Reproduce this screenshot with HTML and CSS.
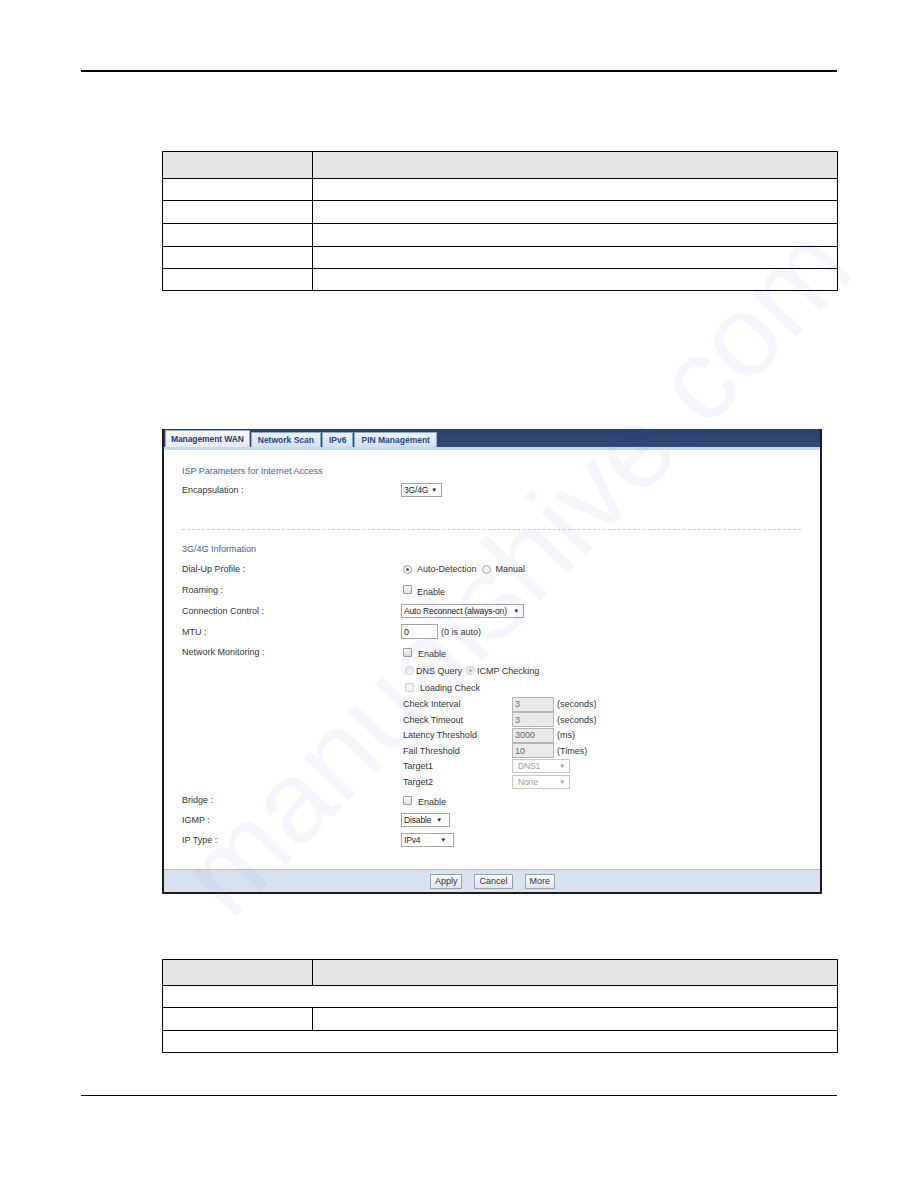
FILE: index.html
```html
<!DOCTYPE html>
<html>
<head>
<meta charset="utf-8">
<title>Management WAN</title>
<link rel="stylesheet" href="styles.css">
</head>
<body>
<div class="page">
  <div class="rule rule-top"></div>

  <table class="doc-table t1">
    <colgroup><col class="c1"><col></colgroup>
    <tr class="hd"><th></th><th></th></tr>
    <tr class="r22"><td></td><td></td></tr>
    <tr class="r23"><td></td><td></td></tr>
    <tr class="r23"><td></td><td></td></tr>
    <tr class="r22"><td></td><td></td></tr>
    <tr class="r22"><td></td><td></td></tr>
  </table>

  <div class="panel">
    <div class="tabbar">
      <div class="tab active">Management WAN</div>
      <div class="tab">Network Scan</div>
      <div class="tab">IPv6</div>
      <div class="tab">PIN Management</div>
    </div>
    <div class="body">
      <div class="row h20"><span class="sec">ISP Parameters for Internet Access</span></div>
      <div class="row h18">
        <span class="lbl">Encapsulation :</span>
        <span class="sel w-encap"><span>3G/4G</span><span class="arr">▼</span></span>
      </div>
      <div class="divider"></div>
      <div class="row h20"><span class="sec">3G/4G Information</span></div>
      <div class="row h20">
        <span class="lbl">Dial-Up Profile :</span>
        <span class="ctl">
          <span class="radio on"></span><span class="opt">Auto-Detection</span>
          <span class="radio"></span><span class="opt">Manual</span>
        </span>
      </div>
      <div class="row h21">
        <span class="lbl">Roaming :</span>
        <span class="ctl"><span class="check"></span><span class="opt low">Enable</span></span>
      </div>
      <div class="row h21">
        <span class="lbl">Connection Control :</span>
        <span class="sel w-conn"><span>Auto Reconnect (always-on)</span><span class="arr">▼</span></span>
      </div>
      <div class="row h21">
        <span class="lbl">MTU :</span>
        <span class="ctl"><span class="inp w-mtu">0</span><span class="unit">(0 is auto)</span></span>
      </div>
      <div class="row h20">
        <span class="lbl">Network Monitoring :</span>
        <span class="ctl"><span class="check"></span><span class="opt low wide">Enable</span></span>
      </div>
      <div class="row h17">
        <span></span>
        <span class="ctl ind">
          <span class="radio dis"></span><span class="opt tight">DNS Query</span>
          <span class="radio dis on"></span><span class="opt tight">ICMP Checking</span>
        </span>
      </div>
      <div class="row h17">
        <span></span>
        <span class="ctl ind"><span class="check dis"></span><span class="opt wide">Loading Check</span></span>
      </div>
      <div class="row h16">
        <span></span>
        <span class="sub"><span class="slbl">Check Interval</span><span class="inp dis w-sub">3</span><span class="unit">(seconds)</span></span>
      </div>
      <div class="row h15">
        <span></span>
        <span class="sub"><span class="slbl">Check Timeout</span><span class="inp dis w-sub">3</span><span class="unit">(seconds)</span></span>
      </div>
      <div class="row h16">
        <span></span>
        <span class="sub"><span class="slbl">Latency Threshold</span><span class="inp dis w-sub">3000</span><span class="unit">(ms)</span></span>
      </div>
      <div class="row h15">
        <span></span>
        <span class="sub"><span class="slbl">Fail Threshold</span><span class="inp dis w-sub">10</span><span class="unit">(Times)</span></span>
      </div>
      <div class="row h16">
        <span></span>
        <span class="sub"><span class="slbl">Target1</span><span class="sel dis w-tgt"><span>DNS1</span><span class="arr">▼</span></span></span>
      </div>
      <div class="row h16">
        <span></span>
        <span class="sub"><span class="slbl">Target2</span><span class="sel dis w-tgt"><span>None</span><span class="arr">▼</span></span></span>
      </div>
      <div class="row h20">
        <span class="lbl">Bridge :</span>
        <span class="ctl"><span class="check"></span><span class="opt low wide">Enable</span></span>
      </div>
      <div class="row h20">
        <span class="lbl">IGMP :</span>
        <span class="sel w-igmp"><span>Disable</span><span class="arr">▼</span></span>
      </div>
      <div class="row h20">
        <span class="lbl">IP Type :</span>
        <span class="sel w-ip"><span>IPv4</span><span class="arr">▼</span></span>
      </div>
    </div>
    <div class="foot">
      <span class="btn">Apply</span>
      <span class="btn">Cancel</span>
      <span class="btn">More</span>
    </div>
  </div>

  <table class="doc-table t2">
    <colgroup><col class="c1"><col></colgroup>
    <tr class="hd2"><th></th><th></th></tr>
    <tr class="r22"><td colspan="2"></td></tr>
    <tr class="r23"><td></td><td></td></tr>
    <tr class="r22"><td colspan="2"></td></tr>
  </table>

  <div class="rule rule-bottom"></div>

  <div class="watermark">manualshive.com</div>
</div>
</body>
</html>
```

FILE: styles.css
```css
html, body {
  margin: 0;
  padding: 0;
  background: #fff;
}

.page {
  position: relative;
  width: 918px;
  height: 1188px;
  overflow: hidden;
  font-family: "Liberation Sans", Arial, sans-serif;
  display: flow-root;
}

.rule {
  margin-left: 81px;
  width: 756px;
  height: 0;
}

.rule-top {
  margin-top: 70px;
  border-top: 2px solid #000;
}

.rule-bottom {
  margin-top: 42px;
  border-top: 1px solid #000;
}

.doc-table {
  margin-left: 162px;
  width: 676px;
  border-collapse: collapse;
  table-layout: fixed;
}

.doc-table th,
.doc-table td {
  border: 1px solid #000;
  padding: 0;
}

.doc-table th {
  background: #e6e6e6;
}

.doc-table .c1 {
  width: 150px;
}

.t1 {
  margin-top: 79px;
}

.t2 {
  margin-top: 65px;
}

.hd { height: 27px; }
.hd2 { height: 26px; }
.r22 { height: 22px; }
.r23 { height: 23px; }

/* ---------- panel ---------- */
.panel {
  margin-top: 138px;
  margin-left: 162px;
  width: 660px;
  box-sizing: border-box;
  border: 2px solid #1c1c1c;
  border-top: 0;
  font-size: 9px;
  color: #333;
}

.tabbar {
  height: 18px;
  background: linear-gradient(#2a3f68, #33497a);
  border-bottom: 3px solid #c4d8f0;
  display: flex;
  align-items: flex-end;
  padding-left: 1px;
  gap: 1px;
}

.tab {
  height: 15px;
  line-height: 15px;
  padding: 0 6px;
  font-size: 8.5px;
  font-weight: bold;
  color: #2a4a7c;
  background: linear-gradient(#eef4fb, #cfdff2);
  border: 1px solid #8eaad0;
  border-bottom: 0;
  box-sizing: border-box;
  white-space: nowrap;
}

.tab.active {
  height: 17px;
  line-height: 17px;
  padding: 0 5px;
  letter-spacing: -0.1px;
  background: linear-gradient(#f7f9fc, #e3ebf6);
  color: #24406e;
}

.body {
  padding: 11px 19px 19px 18px;
}

.row {
  display: grid;
  grid-template-columns: 219px 1fr;
  align-items: center;
  white-space: nowrap;
}

.h15 { height: 15px; }
.h16 { height: 16px; }
.h17 { height: 17px; }
.h18 { height: 18px; }
.h20 { height: 20px; }
.h21 { height: 21px; }

.sec {
  grid-column: 1 / 3;
  color: #3e6496;
}

.lbl {
  color: #333;
}

.divider {
  margin-top: 30px;
  margin-bottom: 9px;
  border-top: 1px dashed #cfcfcf;
}

.ctl {
  display: flex;
  align-items: center;
  padding-left: 2px;
}

.ctl.ind {
  padding-left: 4px;
}

.opt {
  margin-left: 5px;
  margin-right: 5px;
}

.opt.tight {
  margin-left: 2px;
  margin-right: 4px;
}

.opt.wide {
  margin-left: 6px;
}

.opt.low {
  position: relative;
  top: 2px;
}

.radio {
  width: 9px;
  height: 9px;
  box-sizing: border-box;
  border-radius: 50%;
  border: 1px solid #a3a3a3;
  background: radial-gradient(#fff, #e8e8e8);
  display: inline-flex;
  align-items: center;
  justify-content: center;
}

.radio.on::after {
  content: "";
  width: 3px;
  height: 3px;
  border-radius: 50%;
  background: #555;
}

.radio.dis {
  border-color: #d2d2d2;
  background: #f4f4f4;
}

.radio.dis.on::after {
  background: #b0b0b0;
}

.check {
  width: 9px;
  height: 9px;
  box-sizing: border-box;
  border: 1px solid #9c9c9c;
  border-radius: 1px;
  background: linear-gradient(#fcfcfc, #e2e2e2);
}

.check.dis {
  border-color: #d0d0d0;
  background: #f2f2f2;
}

.sel {
  display: inline-flex;
  align-items: center;
  justify-content: space-between;
  height: 14px;
  box-sizing: border-box;
  border: 1px solid #a5a5a5;
  background: #fff;
  padding: 0 4px 0 2px;
  color: #222;
  justify-self: start;
  white-space: nowrap;
  overflow: hidden;
  font-size: 8.5px;
  letter-spacing: -0.15px;
}

.sel .arr {
  font-size: 6px;
  color: #222;
  margin-left: 3px;
}

.sel.dis {
  border-color: #c8c8c8;
  color: #a0a0a0;
  padding-left: 5px;
}

.sel.dis .arr {
  color: #999;
}

.w-encap { width: 41px; }
.w-conn { width: 123px; }
.w-igmp { width: 49px; padding-right: 7px; }
.w-ip { width: 53px; padding-right: 7px; }
.w-tgt { width: 58px; }

.inp {
  display: inline-flex;
  align-items: center;
  height: 15px;
  box-sizing: border-box;
  border: 1px solid #a5a5a5;
  background: #fff;
  padding-left: 2px;
  color: #222;
}

.inp.dis {
  background: #ebebeb;
  border-color: #b4b4b4;
  color: #666;
}

.w-mtu {
  width: 37px;
  margin-left: -2px;
}

.w-sub {
  width: 42px;
  height: 15px;
}

.unit {
  margin-left: 3px;
}

.sub {
  display: grid;
  grid-template-columns: 109px auto auto;
  align-items: center;
  justify-content: start;
  padding-left: 2px;
}

.slbl {
  color: #333;
}

.foot {
  height: 23px;
  box-sizing: border-box;
  border-top: 1px solid #a9c0de;
  background: #d9e3f0;
  display: flex;
  align-items: center;
  justify-content: center;
  gap: 12px;
  padding-left: 1px;
}

.btn {
  height: 15px;
  line-height: 13px;
  box-sizing: border-box;
  padding: 0 4px;
  border: 1px solid #9aa3ad;
  background: linear-gradient(#fdfdfd, #e1e4e9);
  color: #333;
  font-size: 9px;
}

/* watermark overlay (very faint, as in the source) */
.watermark {
  position: absolute;
  left: 64px;
  top: 512px;
  width: 902px;
  height: 116px;
  line-height: 116px;
  font-size: 116px;
  font-family: "Liberation Sans", Arial, sans-serif;
  color: rgba(80, 80, 235, 0.06);
  transform: rotate(-46deg);
  transform-origin: center;
  white-space: nowrap;
  pointer-events: none;
}
```
